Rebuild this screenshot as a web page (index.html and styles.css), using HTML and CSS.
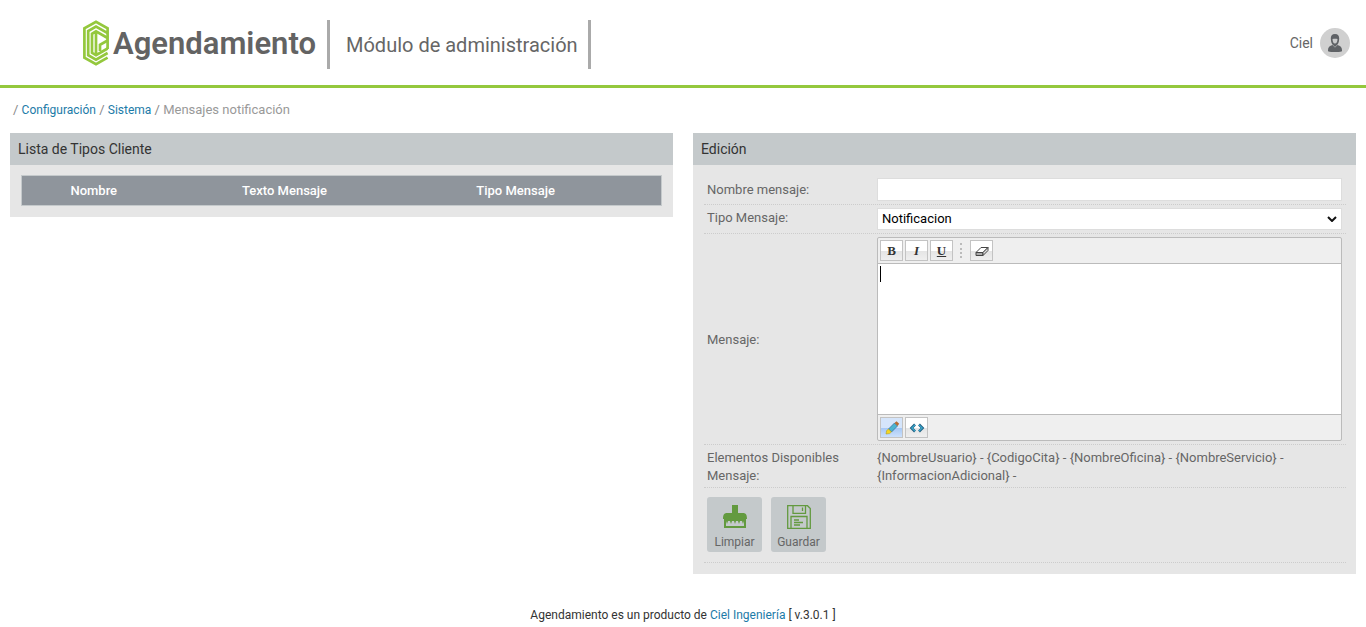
FILE: index.html
```html
<!DOCTYPE html>
<html lang="es">
<head>
<meta charset="utf-8">
<title>Agendamiento</title>
<link rel="stylesheet" href="styles.css">
</head>
<body>
<header class="top">
  <div class="brand">
    <svg class="brand-mark" viewBox="0 0 26 46" fill="none" stroke="#94c83d" stroke-width="2.7">
      <path d="M24.600 29V8.400L13 1.800 1.400 8.400V37.600L13 44.200 24.600 37.600"/>
      <path d="M24.600 13.200 13 6.600 5.200 11V35.200L13 39.600 24.600 33"/>
      <path d="M24.600 18 13 11.400 9 13.800V32.800L13 35.100 24.600 28.500M13 13V34"/>
      <path d="M24.600 20.500 17 24.800V31"/>
    </svg>
    <span class="brand-name">Agendamiento</span>
  </div>
  <div class="module">Módulo de administración</div>
  <div class="user">
    <span>Ciel</span>
    <svg class="avatar" viewBox="0 0 30 30">
      <circle cx="15" cy="15" r="15" fill="#d0d0d0"/>
      <path fill="#5f6266" d="M15 6c-3 0-4.300 2-4.200 4.500l.3 3c.4 2 1.400 3.200 2.400 4.100L15 19l1.500-1.400c1-.9 2-2.100 2.400-4.100l.3-3C19.300 8 18 6 15 6z"/>
      <path fill="#c9cacb" d="M12.500 11c1.700-.2 3.300-.4 5 0-.1 2.700-.8 4.600-2.500 4.600s-2.400-1.900-2.500-4.600z"/>
      <path fill="#5f6266" d="M12.500 17c-2.900.9-4.500 2.200-4.500 5v1.200c4 1.200 10 1.200 14 0V22c0-2.800-1.600-4.100-4.500-5L15 19.500z"/>
    </svg>
  </div>
</header>
<nav class="crumbs">/ <a href="#">Configuración</a> / <a href="#">Sistema</a> / <span class="here">Mensajes notificación</span></nav>
<main class="columns">
  <section class="panel">
    <h2 class="panel-title">Lista de Tipos Cliente</h2>
    <div class="list-body">
      <table class="grid">
        <colgroup><col class="col-name"><col class="col-text"><col class="col-type"><col></colgroup>
        <thead><tr><th>Nombre</th><th>Texto Mensaje</th><th>Tipo Mensaje</th><td></td></tr></thead>
      </table>
    </div>
  </section>
  <section class="panel">
    <h2 class="panel-title">Edición</h2>
    <form class="form">
      <div class="row">
        <label class="label" for="nombre">Nombre mensaje:</label>
        <input class="field" id="nombre" type="text">
      </div>
      <div class="row">
        <label class="label" for="tipo">Tipo Mensaje:</label>
        <div class="pick">
          <select class="field" id="tipo"><option>Notificacion</option></select>
          <svg class="chevron" viewBox="0 0 10 6" fill="none" stroke="#111" stroke-width="2"><path d="m1 1 4 4 4-4"/></svg>
        </div>
      </div>
      <div class="row">
        <label class="label middle" for="mensaje">Mensaje:</label>
        <div class="editor">
          <div class="bar bar-top">
            <button type="button" class="tool">B</button>
            <button type="button" class="tool italic">I</button>
            <button type="button" class="tool under">U</button>
            <span class="divider"></span>
            <button type="button" class="tool" aria-label="Borrar formato">
              <svg class="glyph" viewBox="0 0 16 16" stroke="#444" stroke-linejoin="round"><path fill="#fff" d="m2 9.500 5-5h7l-5 5z"/><path fill="#aaa" d="M2 9.500h7v3H2z"/><path fill="#ddd" d="m9 9.500 5-5v3l-5 5z"/></svg>
            </button>
          </div>
          <div class="writing">
            <textarea class="area" id="mensaje"></textarea>
            <span class="caret"></span>
          </div>
          <div class="bar bar-bottom">
            <button type="button" class="tool active" aria-label="Diseño">
              <svg class="glyph" viewBox="0 0 16 16"><path fill="#4bb4d0" stroke="#31689c" stroke-width=".7" d="m4.500 9 6-6 3 3-6 6z"/><path fill="#b76b32" d="m10.500 3 2-1.800 2.700 2.600-1.700 2.200z"/><path fill="#f4d621" stroke="#a89518" stroke-width=".5" d="m2 14 .6-3.400L4.500 9l3 3-2 1.600z"/></svg>
            </button>
            <button type="button" class="tool" aria-label="HTML">
              <svg class="glyph" viewBox="0 0 16 16" fill="none"><path stroke="#245f80" stroke-width="2.600" d="M6 4.500 2.500 8 6 11.500m4-7L13.500 8 10 11.500"/><path stroke="#38abd0" stroke-width="1.200" d="M6 4.800 2.800 8 6 11.200m4-6.400L13.200 8 10 11.200"/></svg>
            </button>
          </div>
        </div>
      </div>
      <div class="row tokens-row">
        <div class="label">Elementos Disponibles Mensaje:</div>
        <div class="tokens">{NombreUsuario} - {CodigoCita} - {NombreOficina} - {NombreServicio} - {InformacionAdicional} -</div>
      </div>
      <div class="actions">
        <button type="button" class="action">
          <svg class="action-icon" viewBox="0 0 24 24"><path fill="#639a3f" d="M9 0h6v8h5c3 0 4 2 4 6h-1v9H1v-9H0c0-4 1-6 4-6h5z"/><path fill="#c4c9cb" d="M3 16v5h18v-5l-1 3-1-3h-2l-1 3-1-3h-2l-1 3-1-3H9l-1 3-1-3H5l-1 3z"/></svg>
          Limpiar
        </button>
        <button type="button" class="action">
          <svg class="action-icon" viewBox="0 0 24 24" fill="none" stroke="#639a3f" stroke-width="1.300"><path d="M.7.700h19.800l2.800 2.800v19.800H.7zM6 .7v7.600h12.500V.7M4 23V11.500h16V23"/><path d="M15.500 2.500v3.500M7 15h5M7 17.500h9M7 20h6"/></svg>
          Guardar
        </button>
      </div>
    </form>
  </section>
</main>
<footer class="foot">Agendamiento es un producto de <a href="#">Ciel Ingeniería</a> [ v.3.0.1 ]</footer>
</body>
</html>
```
FILE: styles.css
```css
* { box-sizing: border-box; }
body { margin: 0; background: #fff; color: #666; font: 13px/18px Roboto, sans-serif; }
a { color: #1c7ba8; text-decoration: none; }
button, input, select, textarea { font: inherit; margin: 0; }
.top { display: flex; align-items: center; height: 88px; padding: 0 16px 0 82px; border-bottom: 3px solid #94c83d; }
.brand { display: flex; align-items: flex-start; height: 49px; padding-right: 11px; border-right: 3px solid #aaa; margin-top: 4px; }
.brand-mark { width: 28px; height: 46px; }
.brand-name { margin-left: 3px; color: #636363; font: 600 31px/48px Roboto, sans-serif; }
.module { height: 49px; margin-top: 4px; padding: 0 10px 0 16px; border-right: 3px solid #aaa; font-size: 20px; line-height: 50px; }
.user { display: flex; align-items: center; gap: 7px; margin-left: auto; font-size: 14px; }
.avatar { width: 30px; height: 30px; }
.crumbs { padding: 13px 13px 0; color: #888; }
.crumbs a { font-size: 12px; }
.here { color: #999; }
.columns { display: grid; grid-template-columns: 1fr 1fr; gap: 20px; align-items: start; padding: 14px 10px 0; }
.panel { background: #e6e6e6; }
.panel-title { margin: 0; padding: 0 8px; background: #c4c9cb; color: #333; font-size: 14px; font-weight: 400; line-height: 32px; }
.list-body { padding: 10px 11px 11px; }
.grid { width: 100%; table-layout: fixed; border-collapse: collapse; background: #8f959c; border: 1px solid #c4c9cb; color: #fff; }
.grid th { height: 30px; padding: 0; font-weight: 500; }
.col-name { width: 22.5%; }
.col-text { width: 37.2%; }
.col-type { width: 35%; }
.form { padding: 10px 10px 11px 11px; }
.row { display: flex; padding: 3px 4px 3px 3px; border-bottom: 1px dotted #ccc; }
.tokens-row { padding-bottom: 2px; }
.label { flex: 0 0 170px; padding: 1px 30px 0 0; }
.row:first-child .label { padding-top: 3px; }
.middle { align-self: center; }
.field { display: block; flex: 1; width: 100%; height: 23px; padding: 0 4px; border: 1px solid #ddd; border-radius: 0; background: #fff; color: #000; }
.pick { position: relative; flex: 1; }
.pick .field { height: 22px; appearance: none; }
.chevron { position: absolute; right: 5px; top: 8px; width: 10px; height: 6px; pointer-events: none; }
.editor { flex: 1; border: 1px solid #bbb; border-radius: 2px; background: #efefef; }
.bar { display: flex; gap: 2px; height: 26px; padding: 2px; }
.bar-top { border-bottom: 1px solid #bbb; }
.bar-bottom { border-top: 1px solid #bbb; }
.tool { display: flex; align-items: center; justify-content: center; width: 23px; height: 21px; padding: 0; border: 1px solid #c3c3c3; background: linear-gradient(#fff 50%, #e4e4e4 50%, #efefef); color: #333; font: 700 13px/16px "Liberation Serif", serif; }
.italic { font-style: italic; }
.under { text-decoration: underline; }
.active { background: linear-gradient(#d5e5fb 50%, #a3c6f5 50%, #cde1fc); }
.glyph { width: 16px; height: 16px; }
.divider { height: 15px; margin: 3px 6px 3px 5px; border-left: 2px dotted #bbb; }
.writing { position: relative; background: #fff; }
.area { display: block; width: 100%; height: 150px; padding: 3px; border: 0; outline: 0; resize: none; color: #000; }
.caret { position: absolute; left: 2px; top: 2px; width: 1px; height: 16px; background: #000; }
.tokens { flex: 1; padding-top: 1px; }
.actions { display: flex; gap: 9px; padding: 9px 3px 10px; border-bottom: 1px dotted #ccc; }
.action { display: flex; flex-direction: column; align-items: center; gap: 4px; width: 55px; height: 55px; padding: 8px 0 0; border: 0; border-radius: 3px; background: #c4c9cb; color: #666; font-size: 12px; line-height: 18px; }
.action-icon { flex: none; width: 24px; height: 24px; }
.foot { padding: 32px 10px 0; color: #333; font-size: 12px; text-align: center; }
```
